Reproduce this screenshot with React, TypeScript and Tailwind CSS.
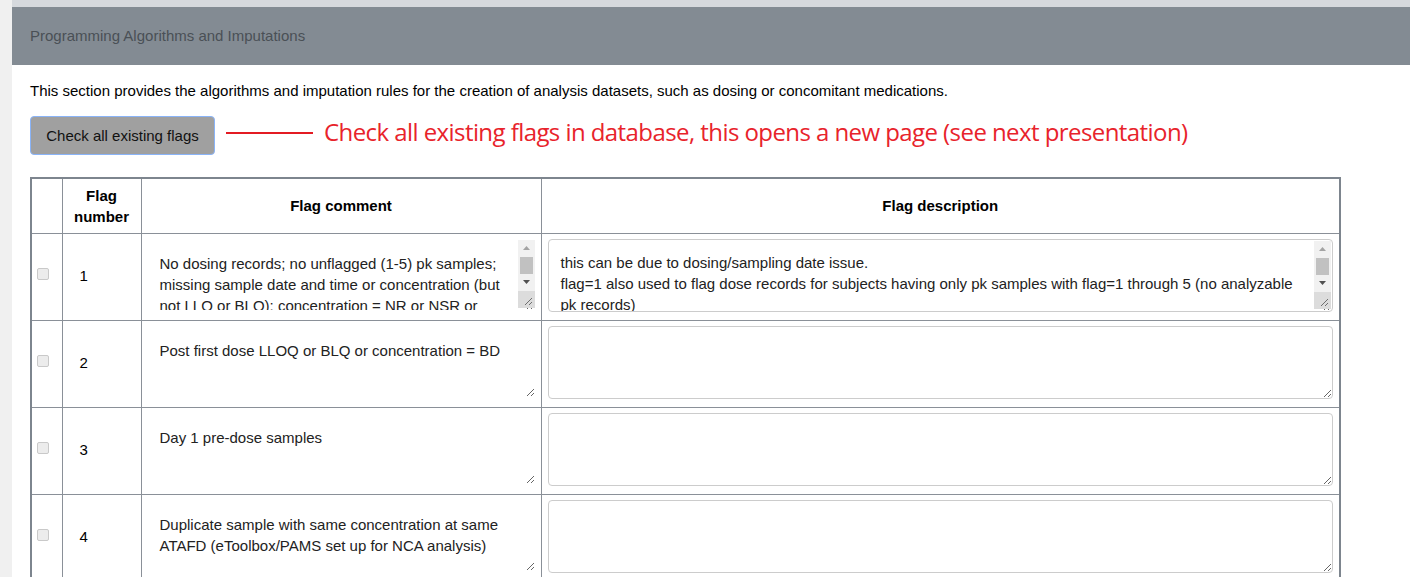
import React from "react";

type Row = { n: number; comment: string; desc: string };

const rows: Row[] = [
  {
    n: 1,
    comment:
      "No dosing records; no unflagged (1-5) pk samples; missing sample date and time or concentration (but not LLQ or BLQ); concentration = NR or NSR or NS; or other reasons that prevent the sample from being used",
    desc:
      "this can be due to dosing/sampling date issue.\nflag=1 also used to flag dose records for subjects having only pk samples with flag=1 through 5 (no analyzable pk records)",
  },
  { n: 2, comment: "Post first dose LLOQ or BLQ or concentration = BD", desc: "" },
  { n: 3, comment: "Day 1 pre-dose samples", desc: "" },
  {
    n: 4,
    comment: "Duplicate sample with same concentration at same ATAFD (eToolbox/PAMS set up for NCA analysis)",
    desc: "",
  },
];

// old-style scrollbar drawn over an overflowing textarea
function FakeScrollbar({ className }: { className: string }) {
  return (
    <div className={"absolute w-[17px] flex flex-col bg-[#f1f1f1] pointer-events-none " + className}>
      <div className="h-[17px] flex items-center justify-center">
        <svg width="7" height="4" viewBox="0 0 7 4">
          <polygon points="3.5,0 7,4 0,4" fill="#a3a3a3" />
        </svg>
      </div>
      <div className="h-[17px] px-[2px]">
        <div className="h-full bg-[#c1c1c1]" />
      </div>
      <div className="h-[17px] flex items-center justify-center">
        <svg width="7" height="4" viewBox="0 0 7 4">
          <polygon points="0,0 7,0 3.5,4" fill="#505050" />
        </svg>
      </div>
      <div className="h-[17px] bg-[#dcdcdc] flex items-end justify-end">
        <svg width="17" height="17" viewBox="0 0 17 17">
          <line x1="14" y1="7" x2="7" y2="14" stroke="#6f6f6f" strokeWidth="1" />
          <line x1="14" y1="11" x2="11" y2="14" stroke="#6f6f6f" strokeWidth="1" />
        </svg>
      </div>
    </div>
  );
}

function FlagRow({ row }: { row: Row }) {
  const scroll = row.desc.length > 0;
  return (
    <tr className="border-t border-[#8a9098]">
      <td className="border-r border-[#8a9098] pl-[5px] align-middle">
        <span className="block w-[12px] h-[12px] mt-[-5px] rounded-[2px] bg-[#ececec] border border-[#c9c9c9]" />
      </td>
      <td className="border-r border-[#8a9098] pl-[17px] align-middle">{row.n}</td>
      <td className="border-r border-[#8a9098] px-[6px] pt-[6px] pb-[9px] align-top">
        <div className="relative">
          <textarea
            defaultValue={row.comment}
            className={
              scroll
                ? "block w-full h-[70px] pl-[12px] pr-[29px] pt-[13px] pb-0 leading-[21px] text-[#222] bg-white resize-y outline-none border-0 overflow-hidden"
                : "block w-full h-[70px] px-[12px] pt-[13px] pb-0 leading-[21px] text-[#222] bg-white resize-y outline-none border-0 overflow-auto"
            }
          />
          {scroll && <FakeScrollbar className="top-0 right-0" />}
        </div>
      </td>
      <td className="px-[6px] pt-[5px] pb-[8px] align-top">
        <div className="relative">
          <textarea
            defaultValue={row.desc}
            className={
              scroll
                ? "block w-full h-[73px] pl-[12px] pr-[29px] pt-[12px] pb-0 leading-[21px] text-[#222] bg-white resize-y outline-none border border-[#cccccc] rounded-[4px] overflow-hidden"
                : "block w-full h-[73px] px-[12px] pt-[12px] pb-0 leading-[21px] text-[#222] bg-white resize-y outline-none border border-[#cccccc] rounded-[4px] overflow-auto"
            }
          />
          {scroll && <FakeScrollbar className="top-[2px] right-[2px]" />}
        </div>
      </td>
    </tr>
  );
}

export default function App() {
  return (
    <div className="flex min-h-[577px] bg-white font-['Liberation_Sans',Arial,sans-serif] text-[15px] text-black">
      <div className="w-[12px] shrink-0 bg-[#f0f0f0]" />
      <div className="flex-1">
        <div className="h-[7px] bg-[#d6d9dd]" />
        <div className="h-[58px] bg-[#838b93] px-[18px] pt-[1px] flex items-center text-[#4a5056]">
          Programming Algorithms and Imputations
        </div>
        <div className="px-[18px]">
          <p className="pt-[17px] leading-[17px]">
            This section provides the algorithms and imputation rules for the creation of analysis datasets, such as dosing or concomitant medications.
          </p>
          <div className="flex items-center mt-[17px]">
            <button className="w-[185px] h-[39px] pt-[1px] bg-[#a0a0a0] border border-[#8ab4f8] rounded-[4px] text-[#111]">
              Check all existing flags
            </button>
            <div className="ml-[11px] w-[87px] h-[2px] bg-[#e31b23] -mt-[6px]" />
            <span className="ml-[11px] text-[#e8232b] text-[24px] tracking-[-0.57px] leading-[30px] font-['Open_Sans',sans-serif] -mt-[8px]">
              Check all existing flags in database, this opens a new page (see next presentation)
            </span>
          </div>
          <table className="mt-[22px] w-[1311px] border-collapse border-2 border-[#7d858e] table-fixed">
            <colgroup>
              <col className="w-[31px]" />
              <col className="w-[79px]" />
              <col className="w-[400px]" />
              <col />
            </colgroup>
            <thead>
              <tr className="h-[55px] font-bold">
                <th className="border-r border-[#8a9098]" />
                <th className="border-r border-[#8a9098] leading-[21px]">
                  Flag
                  <br />
                  number
                </th>
                <th className="border-r border-[#8a9098]">Flag comment</th>
                <th>Flag description</th>
              </tr>
            </thead>
            <tbody>
              {rows.map((r) => (
                <FlagRow key={r.n} row={r} />
              ))}
            </tbody>
          </table>
        </div>
      </div>
    </div>
  );
}
